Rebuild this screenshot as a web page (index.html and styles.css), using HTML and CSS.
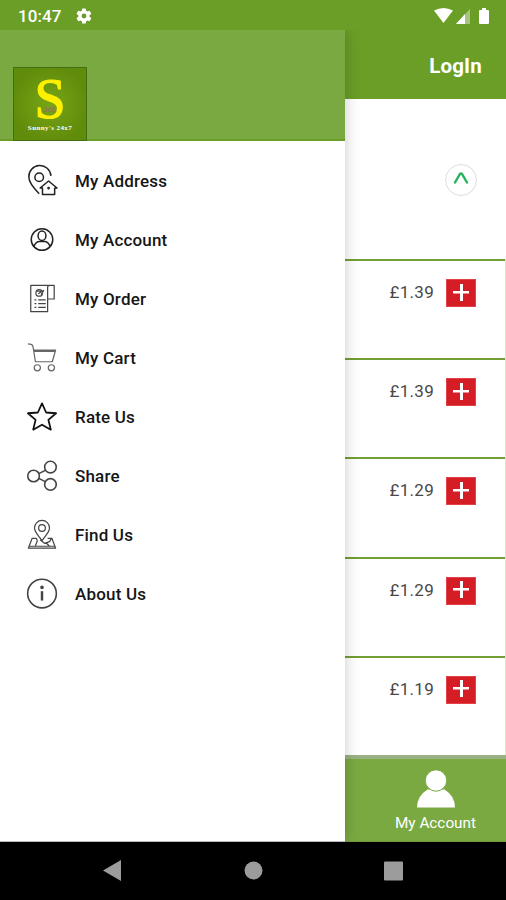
FILE: index.html
```html
<!DOCTYPE html>
<html lang="en">
<head>
<meta charset="utf-8">
<title>Sunny's 24x7</title>
<link rel="stylesheet" href="styles.css">
</head>
<body>
<header class="status">
  <span class="clock">10:47</span>
  <svg class="gear" width="18" height="18" viewBox="0 0 24 24"><path fill="#fff" fill-rule="evenodd" d="M19.4 13a7.6 7.6 0 0 0 0-2l2.100-1.600a.5.5 0 0 0 .1-.6l-2-3.500a.5.5 0 0 0-.6-.2l-2.500 1a7 7 0 0 0-1.700-1l-.4-2.600a.5.5 0 0 0-.5-.5h-4a.5.5 0 0 0-.5.5L9 5.100a7 7 0 0 0-1.700 1l-2.500-1a.5.5 0 0 0-.6.2l-2 3.500a.5.5 0 0 0 .1.600L4.500 11a7.600 7.600 0 0 0 0 2l-2.200 1.600a.5.5 0 0 0-.1.600l2 3.500c.1.200.4.300.6.200l2.500-1a7 7 0 0 0 1.700 1l.4 2.600c0 .3.200.5.500.5h4c.3 0 .5-.2.500-.5l.4-2.600a7 7 0 0 0 1.700-1l2.500 1c.2.100.5 0 .6-.2l2-3.500a.5.5 0 0 0-.1-.6zM12 15.200a3.200 3.200 0 1 1 0-6.400 3.200 3.200 0 0 1 0 6.400z"/></svg>
  <svg class="signals" width="56" height="18" viewBox="0 0 56 18"><path fill="#fff" d="M0 3.500Q9.500-1.500 19 3.500L9.500 16z"/><path fill="#fff" fill-opacity=".4" d="M36 2v15H22z"/><path fill="#fff" d="M31 7v10h-9z"/><path fill="#fff" d="M48 1h4v2h2q1 0 1 1v12q0 1-1 1h-8q-1 0-1-1V4q0-1 1-1h2z"/></svg>
</header>
<div class="screen">
  <nav class="drawer">
    <div class="brand">
      <div class="logo"><span class="letter">S</span><span class="tag">365</span><span class="name">Sunny's 24x7</span></div>
    </div>
    <ul class="menu">
      <li><svg class="dark" viewBox="0 0 32 32"><path d="M13 29.500C7.500 24 2 18 2 12a11.500 11.500 0 0 1 23.500-1.500"/><circle cx="13" cy="12" r="4.600"/><path d="M14 23.500l9-7.500 9 7.500-2.500.3v6.700H16.500v-7z"/><path d="M23 22v3m-1.500-1.500h3" stroke-width="1.500"/></svg>My Address</li>
      <li><svg class="dark" viewBox="0 0 32 32"><circle cx="16" cy="15.500" r="11.500"/><ellipse cx="16" cy="11.500" rx="4.200" ry="5"/><path d="M7.500 23q1.500-5.500 6-5.500h5q4.500 0 6 5.500"/></svg>My Account</li>
      <li><svg viewBox="0 0 32 32"><path d="M22 17V3.500q0-2 2.500-2h4.500v14.500h-7M24.500 1.500H4v28H22V16"/><circle cx="13" cy="9.500" r="3.500"/><path d="M10 7.500h8M12 10.500l3-2M15 11.500l3-5M8 17h2m2 0h8M8 21h2m2 0h8M8 25h2m2 0h8"/></svg>My Order</li>
      <li><svg class="light" viewBox="0 0 32 32"><path d="M1 1l3.500.5q1.500.5 2 3L9 20h18l3.500-12.500H7M7.500 9h22"/><circle cx="11" cy="26.500" r="3.300"/><circle cx="26" cy="26.500" r="3.300"/></svg>My Cart</li>
      <li><svg class="star" viewBox="0 0 32 32"><path d="M16 1.500l4.400 9.700 10.600.8-8.200 7 2.600 10.500L16 24.200 6.600 29.500l2.600-10.500L1 12l10.600-.8z"/></svg>Rate Us</li>
      <li><svg class="share" viewBox="0 0 32 32"><circle cx="7" cy="16" r="6.200"/><circle cx="25" cy="6.500" r="6.200"/><circle cx="25" cy="25" r="6.200"/><path d="M12.500 13.500l7-3.500M12.500 18.500l7 3.500"/></svg>Share</li>
      <li><svg viewBox="0 0 32 32"><path d="M16 22C12 16 8 13 8 8.500a8 8 0 0 1 16 0C24 13 20 16 16 22z"/><circle cx="16" cy="8.500" r="3.600"/><path d="M10 19.500H5.500L1.500 30h29l-4-10.500H22M1.500 28h29M10 19.500l1 3-2 5M14 21l5 4 5-2m-4 1l4 4m2.500-9L24 23"/></svg>Find Us</li>
      <li><svg class="info" viewBox="0 0 32 32"><circle cx="16" cy="15.500" r="15.300"/><path d="M16 13v10" stroke-width="2.600"/><circle cx="16" cy="9" r="1.100" fill="#444"/></svg>About Us</li>
    </ul>
  </nav>
  <main class="page">
    <div class="appbar">LogIn</div>
    <div class="section"><span class="toggle"><svg width="16" height="14" viewBox="0 0 16 14"><path d="M2 11.500L7 3q1-1.200 2 0L14 11.500" fill="none" stroke="#25b35c" stroke-width="2.400" stroke-linecap="round"/></svg></span></div>
    <div class="products">
      <div class="product"><span>£1.39</span><b class="add"></b></div>
      <div class="product"><span>£1.39</span><b class="add"></b></div>
      <div class="product"><span>£1.29</span><b class="add"></b></div>
      <div class="product"><span>£1.29</span><b class="add"></b></div>
      <div class="product"><span>£1.19</span><b class="add"></b></div>
    </div>
    <div class="tab"><svg width="38" height="38" viewBox="0 0 38 38"><path d="M0 37.500Q0 26 10.500 19.500h17Q38 26 38 37.500z" fill="#fff"/><circle cx="19" cy="10.500" r="10.700" fill="#fff" stroke="#7aa942" stroke-width="1"/></svg><span>My Account</span></div>
  </main>
</div>
<footer class="system">
  <svg width="506" height="58" viewBox="0 0 506 58" fill="#9c9c9c"><path d="M103 28.500l18-10.500v21z"/><circle cx="253.500" cy="28.500" r="9"/><rect x="384" y="19.500" width="19" height="19" rx="1"/></svg>
</footer>
</body>
</html>
```
FILE: styles.css
```css
* { box-sizing: border-box; }
body { margin: 0; width: 506px; height: 900px; overflow: hidden; display: flex; flex-direction: column; font-family: Roboto, "Liberation Sans", sans-serif; background: #fff; }
.status { height: 30px; flex: none; background: #6a9e27; display: flex; align-items: center; padding: 2px 16px 0 18px; color: #fff; }
.clock { font-size: 17px; font-weight: 500; letter-spacing: .1px; width: 57px; line-height: 28px; }
.signals { margin-left: auto; }
.screen { height: 812px; flex: none; display: grid; grid-template-columns: 345px 161px; }
.drawer { background: #fff; z-index: 1; box-shadow: 0 0 14px rgba(0,0,0,.22); clip-path: inset(0 -20px 0 0); border-bottom: 1px solid #bbb; }
.brand { height: 111px; background: #7aa942; border-bottom: 2px solid #6a9e27; padding: 37px 0 0 13px; }
.logo { width: 74px; height: 74px; border: 1px solid #456d12; background: radial-gradient(circle, #78a516, #608c0b 75%); display: grid; grid-template-rows: 55px 16px; justify-items: center; position: relative; }
.letter { font: 56px/62px "Liberation Serif", serif; height: 55px; color: #fff000; -webkit-text-stroke: 1.2px #fff000; }
.tag { position: absolute; left: 30px; top: 38px; font-size: 7px; line-height: 8px; color: #b0605c; }
.name { font: bold 7px/10px "Liberation Serif", serif; color: #fff; white-space: nowrap; letter-spacing: .4px; }
.menu { list-style: none; margin: 0; padding: 10px 0 0 27px; }
.menu li { height: 59.100px; display: flex; align-items: center; gap: 18px; font-size: 17px; font-weight: 500; color: #161616; letter-spacing: .18px; }
.menu svg { width: 30px; height: 30px; fill: none; stroke: #444; stroke-width: 1.300; stroke-linejoin: round; overflow: visible; }
.menu .dark { stroke: #222; stroke-width: 1.600; }
.menu .light { stroke: #666; }
.menu .star { stroke: #111; stroke-width: 1.900; }
.menu .share, .menu .info { stroke-width: 1.700; }
.page { display: flex; flex-direction: column; }
.appbar { height: 69px; background: #6a9e27; color: #fff; font-size: 20.500px; font-weight: 700; letter-spacing: .2px; display: flex; align-items: center; justify-content: flex-end; padding: 2px 24px 0 0; }
.section { height: 160px; display: flex; justify-content: flex-end; padding: 65px 29px 0 0; }
.toggle { width: 32px; height: 32px; border: 1px solid #ddd; border-radius: 50%; display: flex; align-items: center; justify-content: center; padding-bottom: 4px; }
.products { height: 496px; display: flex; flex-direction: column; border-right: 1px solid #dbe6cb; }
.product { height: 99.250px; border-top: 2.500px solid #719f33; display: flex; align-items: flex-start; justify-content: flex-end; padding: 17px 29px 0 0; gap: 12px; font-size: 17px; line-height: 28px; color: #484848; font-weight: 400; letter-spacing: .3px; }
.add { width: 30px; height: 28px; margin-top: 1px; background: linear-gradient(#fff, #fff) 50% 45% / 16px 2.500px no-repeat, linear-gradient(#fff, #fff) 50% 40% / 3px 17px no-repeat, #d51d26; border: 1px solid #e2434a; }
.tab { height: 87px; background: #7aa942; border-top: 4px solid #9bb184; border-bottom: 1px solid #6f983e; color: #fff; display: flex; flex-direction: column; align-items: center; padding: 11px 0 0 20px; font-size: 15.300px; line-height: 18px; gap: 6px; }
.tab span { white-space: nowrap; }
.system { height: 58px; flex: none; background: #000; }
.system svg { display: block; }
```
